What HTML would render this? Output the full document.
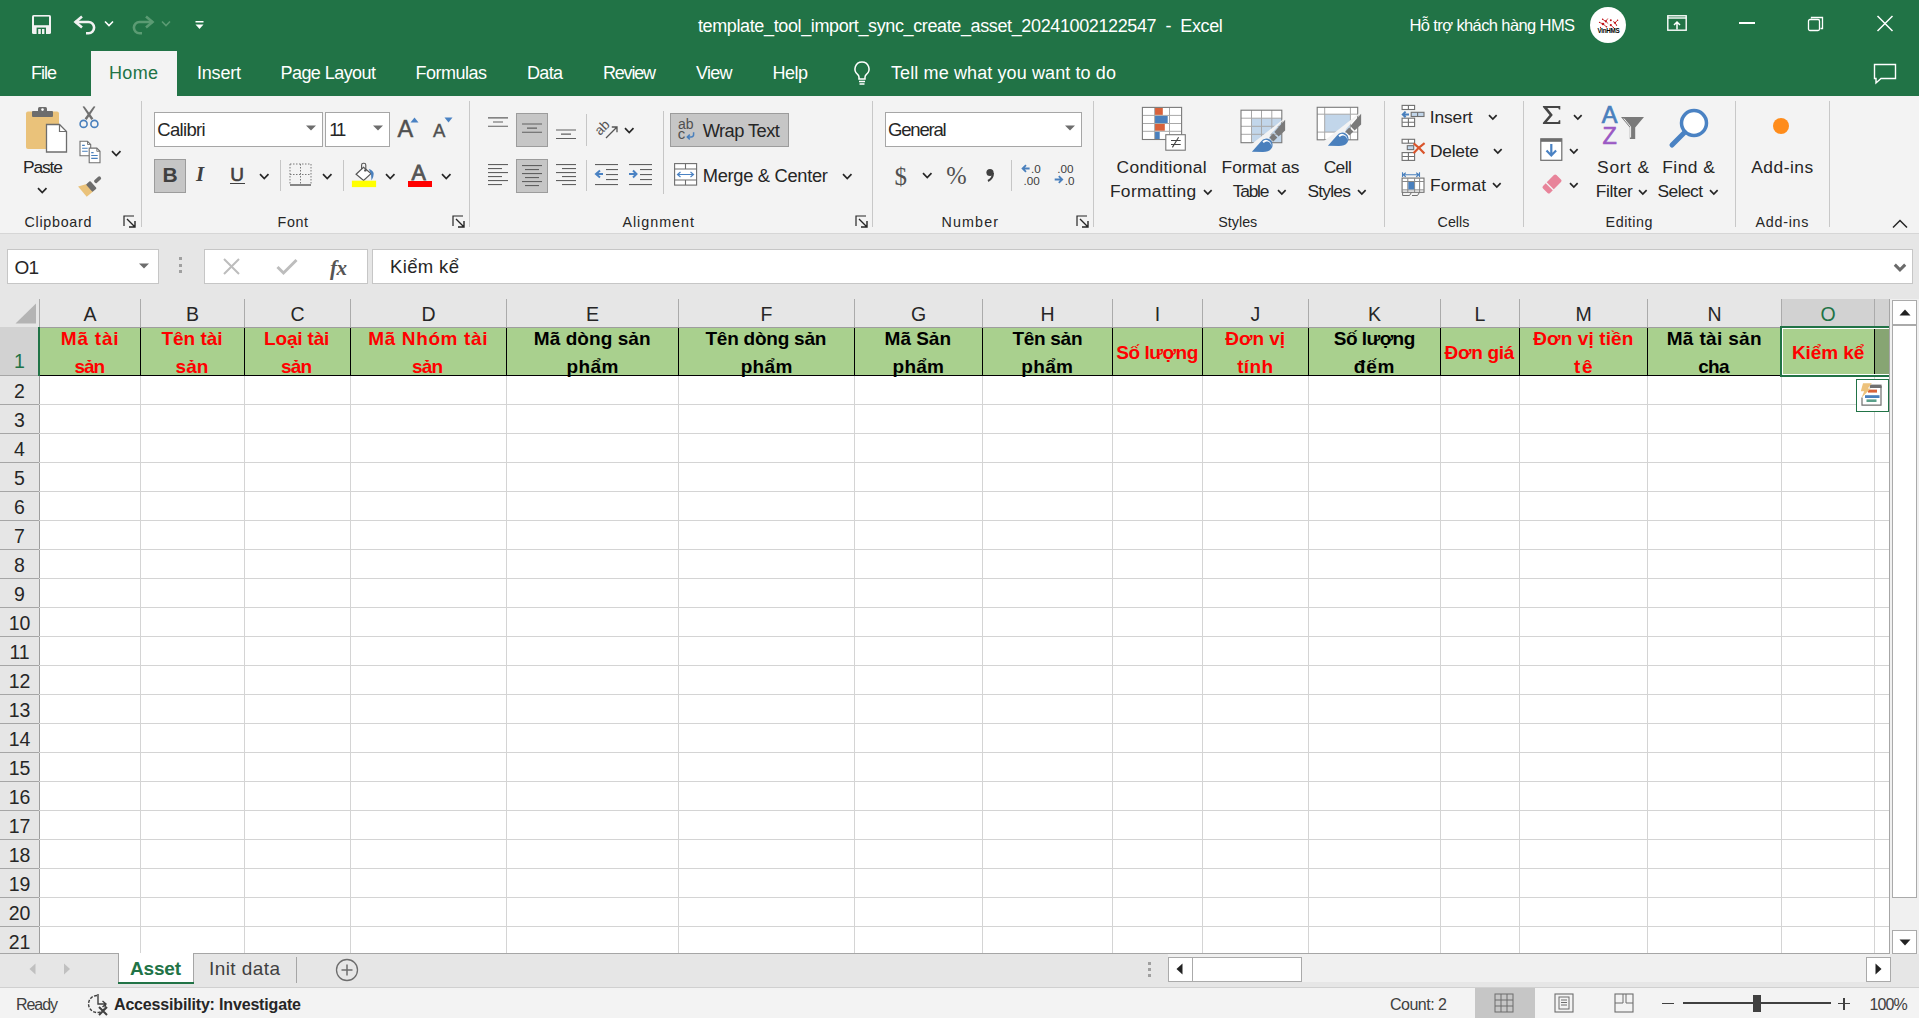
<!DOCTYPE html>
<html><head><meta charset="utf-8">
<style>
*{margin:0;padding:0;box-sizing:border-box}
html,body{width:1919px;height:1018px;overflow:hidden;background:#fff;font-family:"Liberation Sans",sans-serif;color:#262626;position:relative}
.a{position:absolute}
.t{position:absolute;white-space:nowrap;line-height:1}
svg{position:absolute;overflow:visible}
</style></head><body>
<div class="a" style="left:0px;top:0px;width:1919px;height:96px;background:#217346;"></div>
<div class="a" style="left:91px;top:51px;width:86px;height:45px;background:#f3f3f3;"></div>
<div class="a" style="left:0px;top:96px;width:1919px;height:137px;background:#f3f3f3;"></div>
<div class="a" style="left:0px;top:233px;width:1919px;height:1px;background:#d6d6d6;"></div>
<div class="a" style="left:0px;top:234px;width:1919px;height:65px;background:#e6e6e6;"></div>
<div class="t" style="left:698.0px;top:16.8px;font-size:18px;color:#ffffff;letter-spacing:-0.38px;">template_tool_import_sync_create_asset_20241002122547&nbsp;&nbsp;-&nbsp;&nbsp;Excel</div>
<div class="t" style="left:1409.5px;top:17.0px;font-size:16.5px;color:#ffffff;letter-spacing:-0.61px;">Hỗ trợ khách hàng HMS</div>
<svg style="left:32px;top:15px;" width="19" height="19" viewBox="0 0 19 19"><rect x="0" y="0" width="19" height="19" rx="1.6" fill="#f2f2f2"/><rect x="2" y="1.6" width="15" height="8.6" fill="#217346"/><rect x="4.6" y="12.6" width="9.4" height="6.4" fill="#217346"/><rect x="6.2" y="14" width="2.6" height="5" fill="#f2f2f2"/><rect x="10" y="14" width="2.4" height="5" fill="#f2f2f2"/></svg>
<svg style="left:70px;top:12px;" width="30" height="26" viewBox="0 0 30 26"><path d="M12 4.5L5.5 10 12 15.5" fill="none" stroke="#f2f2f2" stroke-width="2.6"/><path d="M5 10H18.5A5.6 5.6 0 0 1 18.5 21.2H16" fill="none" stroke="#f2f2f2" stroke-width="2.6"/></svg>
<svg style="left:104px;top:20px;" width="10" height="8" viewBox="0 0 10 8"><path d="M1 1.5l4 4 4-4" fill="none" stroke="#fff" stroke-width="1.6"/></svg>
<svg style="left:128px;top:12px;" width="30" height="26" viewBox="0 0 30 26"><path d="M18 4.5L24.5 10 18 15.5" fill="none" stroke="#5b9b73" stroke-width="2.6"/><path d="M25 10H11.5A5.6 5.6 0 0 0 11.5 21.2H14" fill="none" stroke="#5b9b73" stroke-width="2.6"/></svg>
<svg style="left:161px;top:20px;" width="10" height="8" viewBox="0 0 10 8"><path d="M1 1.5l4 4 4-4" fill="none" stroke="#5b9b73" stroke-width="1.6"/></svg>
<svg style="left:195px;top:21px;" width="9" height="9" viewBox="0 0 9 9"><rect x="0.5" y="0" width="8" height="1.5" fill="#fff"/><path d="M0.5 3.5h8l-4 4.5z" fill="#fff"/></svg>
<div class="a" style="left:1590px;top:7px;width:36px;height:36px;border-radius:50%;background:#fff"></div>
<svg style="left:1595px;top:13px;" width="26" height="22" viewBox="0 0 26 22"><g stroke="#c0141a" stroke-width="0.8" fill="none"><path d="M7.6 6.3L10.8 8.3 12.8 5.5M10.8 8.3L13.2 10.6M8 11L11.5 13.8M15.8 12.1L18.5 14.6M18 8.4L20 9.8 22.6 7.3M20 9.8L21.5 12.2M4.5 9.4L8 11"/></g><g fill="#c0141a"><circle cx="10.8" cy="8.3" r="1.1"/><circle cx="8" cy="11" r="1.3"/><circle cx="15.8" cy="7.2" r="1"/><circle cx="15.8" cy="12.1" r="1.1"/><circle cx="20" cy="9.8" r="1.1"/><circle cx="4.5" cy="9.4" r="0.6"/><circle cx="5.5" cy="14.4" r="0.6"/><circle cx="11.5" cy="13.8" r="0.8"/><circle cx="22.6" cy="7.3" r="0.7"/><circle cx="21.5" cy="12.2" r="0.6"/><circle cx="18.5" cy="14.6" r="0.6"/><circle cx="7.6" cy="6.3" r="0.7"/></g><text x="13.5" y="20.2" font-size="6.3" font-weight="bold" text-anchor="middle" fill="#000" font-family="Liberation Sans" letter-spacing="-0.3">VinHMS</text></svg>
<svg style="left:1667px;top:15px;" width="20" height="16" viewBox="0 0 20 16"><rect x="0.8" y="0.8" width="18.4" height="14.4" fill="none" stroke="#fff" stroke-width="1.4"/><path d="M0.8 3h18.4" stroke="#fff" stroke-width="1.4"/><path d="M10 14.5V7M7 10l3-3 3 3" fill="none" stroke="#fff" stroke-width="1.5"/></svg>
<div class="a" style="left:1739px;top:22px;width:16px;height:1.5px;background:#fff;"></div>
<svg style="left:1807px;top:15px;" width="18" height="17" viewBox="0 0 18 17"><path d="M4.5 3.5V2.5h11v11h-2" fill="none" stroke="#fff" stroke-width="1.3"/><rect x="1.5" y="4.5" width="11" height="11" rx="1.5" fill="none" stroke="#fff" stroke-width="1.3"/></svg>
<svg style="left:1876px;top:15px;" width="18" height="17" viewBox="0 0 18 17"><path d="M1.5 1l15 15M16.5 1l-15 15" stroke="#fff" stroke-width="1.5"/></svg>
<div class="t" style="left:31.0px;top:64.1px;font-size:18px;color:#ffffff;letter-spacing:-1.00px;">File</div>
<div class="t" style="left:109.0px;top:64.1px;font-size:18px;color:#217346;letter-spacing:0.33px;">Home</div>
<div class="t" style="left:197.0px;top:64.1px;font-size:18px;color:#ffffff;letter-spacing:-0.20px;">Insert</div>
<div class="t" style="left:280.5px;top:64.1px;font-size:18px;color:#ffffff;letter-spacing:-0.56px;">Page Layout</div>
<div class="t" style="left:415.5px;top:64.1px;font-size:18px;color:#ffffff;letter-spacing:-0.50px;">Formulas</div>
<div class="t" style="left:527.0px;top:64.1px;font-size:18px;color:#ffffff;letter-spacing:-0.67px;">Data</div>
<div class="t" style="left:603.0px;top:64.1px;font-size:18px;color:#ffffff;letter-spacing:-1.20px;">Review</div>
<div class="t" style="left:696.0px;top:64.1px;font-size:18px;color:#ffffff;letter-spacing:-0.73px;">View</div>
<div class="t" style="left:772.5px;top:64.1px;font-size:18px;color:#ffffff;letter-spacing:-0.51px;">Help</div>
<div class="t" style="left:891.0px;top:64.1px;font-size:18px;color:#ffffff;letter-spacing:0.11px;">Tell me what you want to do</div>
<svg style="left:852px;top:60px;" width="20" height="26" viewBox="0 0 20 26"><path d="M10 2a7 7 0 0 0-4.2 12.6c.8.7 1.2 1.6 1.2 2.6V19h6v-1.8c0-1 .4-1.9 1.2-2.6A7 7 0 0 0 10 2z" fill="none" stroke="#fff" stroke-width="1.5"/><path d="M7 21.5h6M7.5 24h5" stroke="#fff" stroke-width="1.5"/></svg>
<svg style="left:1873px;top:63px;" width="25" height="21" viewBox="0 0 25 21"><path d="M1.5 1.5h21v14H8l-5 4.5V15.5H1.5z" fill="none" stroke="#fff" stroke-width="1.4"/></svg>
<div class="a" style="left:141px;top:101px;width:1px;height:126px;background:#c8c8c8;"></div>
<div class="a" style="left:469px;top:101px;width:1px;height:126px;background:#c8c8c8;"></div>
<div class="a" style="left:872px;top:101px;width:1px;height:126px;background:#c8c8c8;"></div>
<div class="a" style="left:1093px;top:101px;width:1px;height:126px;background:#c8c8c8;"></div>
<div class="a" style="left:1384px;top:101px;width:1px;height:126px;background:#c8c8c8;"></div>
<div class="a" style="left:1523px;top:101px;width:1px;height:126px;background:#c8c8c8;"></div>
<div class="a" style="left:1735px;top:101px;width:1px;height:126px;background:#c8c8c8;"></div>
<div class="a" style="left:1829px;top:101px;width:1px;height:126px;background:#c8c8c8;"></div>
<div class="t" style="left:24.5px;top:214.9px;font-size:14.3px;color:#262626;letter-spacing:0.72px;">Clipboard</div>
<svg style="left:123px;top:215px;" width="13" height="13" viewBox="0 0 13 13"><path d="M1 11V1h10" fill="none" stroke="#262626" stroke-width="1.2"/><path d="M4 4l7.5 7.5M6 12h6V6" fill="none" stroke="#262626" stroke-width="1.4"/></svg>
<div class="t" style="left:277.6px;top:214.9px;font-size:14.3px;color:#262626;letter-spacing:0.60px;">Font</div>
<svg style="left:452px;top:215px;" width="13" height="13" viewBox="0 0 13 13"><path d="M1 11V1h10" fill="none" stroke="#262626" stroke-width="1.2"/><path d="M4 4l7.5 7.5M6 12h6V6" fill="none" stroke="#262626" stroke-width="1.4"/></svg>
<div class="t" style="left:622.4px;top:214.9px;font-size:14.3px;color:#262626;letter-spacing:1.00px;">Alignment</div>
<svg style="left:855px;top:215px;" width="13" height="13" viewBox="0 0 13 13"><path d="M1 11V1h10" fill="none" stroke="#262626" stroke-width="1.2"/><path d="M4 4l7.5 7.5M6 12h6V6" fill="none" stroke="#262626" stroke-width="1.4"/></svg>
<div class="t" style="left:941.6px;top:214.9px;font-size:14.3px;color:#262626;letter-spacing:1.11px;">Number</div>
<svg style="left:1076px;top:215px;" width="13" height="13" viewBox="0 0 13 13"><path d="M1 11V1h10" fill="none" stroke="#262626" stroke-width="1.2"/><path d="M4 4l7.5 7.5M6 12h6V6" fill="none" stroke="#262626" stroke-width="1.4"/></svg>
<div class="t" style="left:1218.2px;top:214.9px;font-size:14.3px;color:#262626;letter-spacing:0.03px;">Styles</div>
<div class="t" style="left:1437.6px;top:214.9px;font-size:14.3px;color:#262626;letter-spacing:-0.02px;">Cells</div>
<div class="t" style="left:1605.6px;top:214.9px;font-size:14.3px;color:#262626;letter-spacing:0.53px;">Editing</div>
<div class="t" style="left:1755.6px;top:214.9px;font-size:14.3px;color:#262626;letter-spacing:0.72px;">Add-ins</div>
<svg style="left:1892px;top:219px;" width="16" height="10" viewBox="0 0 16 10"><path d="M1 8.5l7-7 7 7" fill="none" stroke="#262626" stroke-width="1.5"/></svg>
<svg style="left:25px;top:106px;" width="44" height="47" viewBox="0 0 44 47"><rect x="1" y="5.5" width="33" height="37.5" rx="2" fill="#eac27a"/><rect x="7" y="5" width="21" height="6" rx="1" fill="#6d6d6d"/><rect x="13" y="1" width="9" height="6" rx="1.5" fill="#6d6d6d"/><circle cx="17.5" cy="3.6" r="1.3" fill="#fff"/><path d="M21.5 18.5h13l7 7v20.5h-20z" fill="#fff" stroke="#6d6d6d" stroke-width="1.3"/><path d="M34.5 18.5v7h7" fill="none" stroke="#6d6d6d" stroke-width="1.2"/></svg>
<div class="t" style="left:23.1px;top:159.0px;font-size:17.4px;color:#262626;letter-spacing:-1.15px;">Paste</div>
<svg style="left:36.95px;top:186.7px;" width="10.5" height="7.0" viewBox="0 0 10.5 7.0"><path d="M1 1.2l4.25 4.4 4.25 -4.4" fill="none" stroke="#262626" stroke-width="1.7"/></svg>
<svg style="left:78px;top:105px;" width="22" height="24" viewBox="0 0 22 24"><path d="M4.6 1.8Q5.4 0.9 6.5 1.6L15.4 13.4 13.3 15.1z" fill="#707070"/><path d="M17.4 1.8Q16.6 0.9 15.5 1.6L6.6 13.4 8.7 15.1z" fill="#707070"/><circle cx="5.6" cy="18.9" r="3.5" fill="#f3f3f3" stroke="#4a80bd" stroke-width="1.6"/><circle cx="16.4" cy="18.9" r="3.5" fill="#f3f3f3" stroke="#4a80bd" stroke-width="1.6"/></svg>
<svg style="left:79px;top:140px;" width="23" height="24" viewBox="0 0 23 24"><path d="M1 1.3H8.5L11.7 4.5V15.7H1z" fill="#fff" stroke="#707070" stroke-width="1.1"/><path d="M8.5 1.3V4.5H11.7" fill="none" stroke="#707070" stroke-width="0.9"/><path d="M3.1 5.4h2.7M3.1 8.3h5.6M3.1 11.3h5.6" stroke="#4a80bd" stroke-width="1.1"/><path d="M10.2 8.1H17.8L21 11.3V22.7H10.2z" fill="#fff" stroke="#707070" stroke-width="1.1"/><path d="M17.8 8.1V11.3H21" fill="none" stroke="#707070" stroke-width="0.9"/><path d="M12.2 12.6h2.4M12.2 15.5h6.5M12.2 18.4h6.5" stroke="#4a80bd" stroke-width="1.1"/></svg>
<svg style="left:110.95px;top:149.5px;" width="10.5" height="7.0" viewBox="0 0 10.5 7.0"><path d="M1 1.2l4.25 4.4 4.25 -4.4" fill="none" stroke="#262626" stroke-width="1.7"/></svg>
<svg style="left:77px;top:176px;" width="25" height="23" viewBox="0 0 25 23"><path d="M1.1 10.4L9.7 8 16.1 15.4 9.7 20.8z" fill="#eac27a"/><rect x="9.3" y="7.6" width="10" height="5.6" rx="1" transform="rotate(48 14.3 10.4)" fill="#6d6d6d"/><rect x="16.6" y="1.9" width="8" height="3.6" rx="1.6" transform="rotate(-42 20.6 3.7)" fill="#6d6d6d"/></svg>
<div class="a" style="left:154px;top:112px;width:169px;height:35px;background:#fff;border:1px solid #a6a6a6;"></div>
<div class="t" style="left:157.2px;top:121.3px;font-size:18.5px;color:#262626;letter-spacing:-0.66px;">Calibri</div>
<svg style="left:306px;top:125px;" width="11" height="7" viewBox="0 0 11 7"><path d="M0 0.5h10l-5 5z" fill="#6d6d6d"/></svg>
<div class="a" style="left:325px;top:112px;width:65px;height:35px;background:#fff;border:1px solid #a6a6a6;"></div>
<div class="t" style="left:329.2px;top:121.3px;font-size:18.5px;color:#262626;letter-spacing:-2.01px;">11</div>
<svg style="left:373px;top:125px;" width="11" height="7" viewBox="0 0 11 7"><path d="M0 0.5h10l-5 5z" fill="#6d6d6d"/></svg>
<div class="t" style="left:397.5px;top:118.1px;font-size:23.5px;color:#505050;-webkit-text-stroke:0.5px #505050;">A</div>
<svg style="left:410px;top:117px;" width="9" height="6" viewBox="0 0 9 6"><path d="M0.5 5.5l4-5 4 5z" fill="#4a82c3"/></svg>
<div class="t" style="left:433.0px;top:122.3px;font-size:18.5px;color:#505050;-webkit-text-stroke:0.4px #505050;">A</div>
<svg style="left:444px;top:117px;" width="9" height="6" viewBox="0 0 9 6"><path d="M0.5 0.5h8l-4 5z" fill="#4a82c3"/></svg>
<div class="a" style="left:154px;top:159px;width:32px;height:34px;background:#c6c6c6;border:1px solid #9c9c9c;"></div>
<div class="t" style="left:162.6px;top:163.7px;font-size:21px;color:#404040;font-weight:bold;">B</div>
<div class="t" style="left:196.0px;top:163.7px;font-size:21px;color:#404040;font-weight:bold;font-family:'Liberation Serif',serif;font-style:italic;">I</div>
<div class="t" style="left:230.3px;top:165.4px;font-size:19px;color:#404040;-webkit-text-stroke:0.6px #404040;">U</div>
<div class="a" style="left:230px;top:183px;width:15px;height:1.3px;background:#404040;"></div>
<svg style="left:258.95px;top:172.8px;" width="10.5" height="7.0" viewBox="0 0 10.5 7.0"><path d="M1 1.2l4.25 4.4 4.25 -4.4" fill="none" stroke="#262626" stroke-width="1.7"/></svg>
<div class="a" style="left:280px;top:160px;width:1px;height:31px;background:#c6c6c6;"></div>
<svg style="left:289px;top:163px;" width="23" height="23" viewBox="0 0 23 23"><path d="M1 1h21M1 11.5h21M1 1v21M11.5 1v21M22 1v21" stroke="#7a7a7a" stroke-width="1" stroke-dasharray="1.5 1.5" fill="none"/><path d="M1 22h21" stroke="#555" stroke-width="1.4"/></svg>
<svg style="left:321.85px;top:172.8px;" width="10.5" height="7.0" viewBox="0 0 10.5 7.0"><path d="M1 1.2l4.25 4.4 4.25 -4.4" fill="none" stroke="#262626" stroke-width="1.7"/></svg>
<div class="a" style="left:343px;top:160px;width:1px;height:31px;background:#c6c6c6;"></div>
<svg style="left:350px;top:160px;" width="28" height="28" viewBox="0 0 28 28"><path d="M6.1 14.3L13.5 7.4 21 13.6 13.6 20.5z" fill="#fff" stroke="#555" stroke-width="1.2"/><path d="M11.6 9.3V5Q11.6 3.2 13.4 3.2H14Q15.8 3.2 15.8 5V10.3" fill="none" stroke="#555" stroke-width="1.1"/><circle cx="15.3" cy="10.4" r="1.2" fill="#555"/><path d="M18.8 9.1Q23.5 10.5 23.7 13.8Q23.8 17 21.5 20.5L21 14z" fill="#4a80bd"/><rect x="1.9" y="20.7" width="24.2" height="6.4" fill="#ffff00"/></svg>
<svg style="left:384.95px;top:172.8px;" width="10.5" height="7.0" viewBox="0 0 10.5 7.0"><path d="M1 1.2l4.25 4.4 4.25 -4.4" fill="none" stroke="#262626" stroke-width="1.7"/></svg>
<div class="t" style="left:411.5px;top:162.8px;font-size:21.5px;color:#555;-webkit-text-stroke:0.8px #555;">A</div>
<div class="a" style="left:408px;top:181px;width:24px;height:6px;background:#ff0000;"></div>
<svg style="left:440.85px;top:172.8px;" width="10.5" height="7.0" viewBox="0 0 10.5 7.0"><path d="M1 1.2l4.25 4.4 4.25 -4.4" fill="none" stroke="#262626" stroke-width="1.7"/></svg>
<svg style="left:487px;top:116px;" width="22" height="13" viewBox="0 0 22 13"><path d="M1 1.9h20M6 6h10M1 10.2h20" stroke="#606060" stroke-width="1.1"/></svg>
<div class="a" style="left:516px;top:113px;width:32px;height:34px;background:#c6c6c6;border:1px solid #9c9c9c;"></div>
<svg style="left:521px;top:122px;" width="22" height="13" viewBox="0 0 22 13"><path d="M1 2h20M6 6.1h10M1 10.3h20" stroke="#606060" stroke-width="1.1"/></svg>
<svg style="left:555px;top:128px;" width="22" height="13" viewBox="0 0 22 13"><path d="M1 2h20M6 6.1h10M1 10.5h20" stroke="#606060" stroke-width="1.1"/></svg>
<div class="a" style="left:586px;top:114px;width:1px;height:32px;background:#c6c6c6;"></div>
<svg style="left:594px;top:117px;" width="26" height="24" viewBox="0 0 26 24"><text x="6" y="19" font-size="13.5" fill="#555" font-family="Liberation Sans" transform="rotate(-45 6 19)">ab</text><path d="M12 21L23 10M17.8 10H23V15.2" fill="none" stroke="#555" stroke-width="1.3"/></svg>
<svg style="left:624.05px;top:127.1px;" width="10.5" height="7.0" viewBox="0 0 10.5 7.0"><path d="M1 1.2l4.25 4.4 4.25 -4.4" fill="none" stroke="#262626" stroke-width="1.7"/></svg>
<div class="a" style="left:663px;top:111px;width:1px;height:83px;background:#c6c6c6;"></div>
<div class="a" style="left:670px;top:113px;width:119px;height:34px;background:#c6c6c6;border:1px solid #9c9c9c;"></div>
<svg style="left:676px;top:116px;" width="22" height="26" viewBox="0 0 22 26"><text x="2" y="12.6" font-size="14" fill="#505050" font-family="Liberation Sans">ab</text><text x="1.8" y="22.7" font-size="15" fill="#505050" font-family="Liberation Sans">c</text><path d="M17.6 16.2V18.6Q17.6 21 15.2 21H11.6M13.8 18.6L11.3 21 13.8 23.4" fill="none" stroke="#4a80bd" stroke-width="1.5"/></svg>
<div class="t" style="left:702.7px;top:121.5px;font-size:18.3px;color:#262626;letter-spacing:-0.55px;">Wrap Text</div>
<svg style="left:488px;top:163px;" width="21" height="22" viewBox="0 0 21 22"><rect x="0" y="1" width="20" height="1.1" fill="#606060"/><rect x="0" y="5" width="14" height="1.1" fill="#606060"/><rect x="0" y="9" width="20" height="1.1" fill="#606060"/><rect x="0" y="13" width="14" height="1.1" fill="#606060"/><rect x="0" y="17" width="20" height="1.1" fill="#606060"/><rect x="0" y="21" width="14" height="1.1" fill="#606060"/></svg>
<div class="a" style="left:516px;top:159px;width:32px;height:34px;background:#c6c6c6;border:1px solid #9c9c9c;"></div>
<svg style="left:522px;top:164px;" width="20" height="23" viewBox="0 0 20 23"><rect x="0" y="1" width="20" height="1.1" fill="#606060"/><rect x="3" y="5" width="14" height="1.1" fill="#606060"/><rect x="0" y="9" width="20" height="1.1" fill="#606060"/><rect x="3" y="13" width="14" height="1.1" fill="#606060"/><rect x="0" y="17" width="20" height="1.1" fill="#606060"/><rect x="3" y="21" width="14" height="1.1" fill="#606060"/></svg>
<svg style="left:556px;top:163px;" width="21" height="22" viewBox="0 0 21 22"><rect x="0" y="1" width="20" height="1.1" fill="#606060"/><rect x="6" y="5" width="14" height="1.1" fill="#606060"/><rect x="0" y="9" width="20" height="1.1" fill="#606060"/><rect x="6" y="13" width="14" height="1.1" fill="#606060"/><rect x="0" y="17" width="20" height="1.1" fill="#606060"/><rect x="6" y="21" width="14" height="1.1" fill="#606060"/></svg>
<div class="a" style="left:586px;top:160px;width:1px;height:31px;background:#c6c6c6;"></div>
<svg style="left:595px;top:163px;" width="24" height="22" viewBox="0 0 24 22"><rect x="0" y="1" width="23" height="1.1" fill="#606060"/><rect x="0" y="21" width="23" height="1.1" fill="#606060"/><rect x="11" y="6" width="12" height="1.1" fill="#606060"/><rect x="11" y="11" width="12" height="1.1" fill="#606060"/><rect x="11" y="16" width="12" height="1.1" fill="#606060"/><path d="M1 11h7M5 7.5L1 11l4 3.5" fill="none" stroke="#4a82c3" stroke-width="2"/></svg>
<svg style="left:629px;top:163px;" width="24" height="22" viewBox="0 0 24 22"><rect x="0" y="1" width="23" height="1.1" fill="#606060"/><rect x="0" y="21" width="23" height="1.1" fill="#606060"/><rect x="11" y="6" width="12" height="1.1" fill="#606060"/><rect x="11" y="11" width="12" height="1.1" fill="#606060"/><rect x="11" y="16" width="12" height="1.1" fill="#606060"/><path d="M0 11h7M4 7.5L7.5 11 4 14.5" fill="none" stroke="#4a82c3" stroke-width="2"/></svg>
<svg style="left:674px;top:163px;" width="24" height="23" viewBox="0 0 24 23"><rect x="0.6" y="0.6" width="22" height="21.5" fill="#fff" stroke="#6d6d6d" stroke-width="1.1"/><path d="M0.6 6h22M0.6 17h22M11.5 0.6v5.4M11.5 17v5" stroke="#6d6d6d" stroke-width="1.1"/><path d="M3.5 11.5h16M6.5 9l-3 2.5 3 2.5M16.5 9l3 2.5-3 2.5" fill="none" stroke="#4a82c3" stroke-width="1.2"/></svg>
<div class="t" style="left:702.7px;top:167.4px;font-size:18.3px;color:#262626;letter-spacing:-0.29px;">Merge &amp; Center</div>
<svg style="left:842.35px;top:172.5px;" width="10.5" height="7.0" viewBox="0 0 10.5 7.0"><path d="M1 1.2l4.25 4.4 4.25 -4.4" fill="none" stroke="#262626" stroke-width="1.7"/></svg>
<div class="a" style="left:885px;top:112px;width:197px;height:35px;background:#fff;border:1px solid #a6a6a6;"></div>
<div class="t" style="left:888.1px;top:120.9px;font-size:18.5px;color:#262626;letter-spacing:-1.20px;">General</div>
<svg style="left:1065px;top:125px;" width="11" height="7" viewBox="0 0 11 7"><path d="M0 0.5h10l-5 5z" fill="#6d6d6d"/></svg>
<div class="t" style="left:894.4px;top:164.3px;font-size:25px;color:#505050;font-family:'Liberation Serif',serif;">$</div>
<svg style="left:921.75px;top:172.3px;" width="10.5" height="7.0" viewBox="0 0 10.5 7.0"><path d="M1 1.2l4.25 4.4 4.25 -4.4" fill="none" stroke="#262626" stroke-width="1.7"/></svg>
<div class="t" style="left:946.2px;top:163.6px;font-size:24.5px;color:#505050;font-family:'Liberation Serif',serif;">%</div>
<svg style="left:985px;top:168px;" width="11" height="14" viewBox="0 0 11 14"><circle cx="5" cy="4.5" r="3.6" fill="#404040"/><path d="M8 5c0 4-2 6.5-5 8" fill="none" stroke="#404040" stroke-width="2"/></svg>
<div class="a" style="left:1011px;top:160px;width:1px;height:31px;background:#c6c6c6;"></div>
<svg style="left:1020px;top:162px;" width="26" height="26" viewBox="0 0 26 26"><path d="M2.6 6.5h7M6 3.2L2.6 6.5 6 9.8" fill="none" stroke="#4a80bd" stroke-width="1.8"/><text x="11" y="10.8" font-size="11.7" fill="#404040" font-family="Liberation Sans">.0</text><text x="3.4" y="23" font-size="11.7" fill="#404040" font-family="Liberation Sans">.00</text></svg>
<svg style="left:1053px;top:162px;" width="26" height="26" viewBox="0 0 26 26"><text x="4.2" y="10.8" font-size="11.7" fill="#404040" font-family="Liberation Sans">.00</text><path d="M1.7 17.5h7.5M5.8 14.2l3.4 3.3-3.4 3.3" fill="none" stroke="#4a80bd" stroke-width="1.8"/><text x="11.8" y="23" font-size="11.7" fill="#404040" font-family="Liberation Sans">.0</text></svg>
<svg style="left:1141px;top:106px;" width="46" height="46" viewBox="0 0 46 46"><rect x="1.4" y="1.4" width="39.2" height="32.1" fill="#fff"/><rect x="14" y="1.9" width="7.8" height="7" fill="#d9623b"/><rect x="14" y="9.9" width="12.7" height="7.1" fill="#4a80bd"/><rect x="14" y="18" width="9.8" height="6.8" fill="#d9623b"/><rect x="14" y="25.8" width="4.7" height="7.2" fill="#4a80bd"/><path d="M1.4 9.4h39.2M1.4 17.5h39.2M1.4 25.3h39.2M13.6 1.4v32.1M28.5 1.4v32.1" stroke="#a8a8a8" stroke-width="1"/><rect x="1.4" y="1.4" width="39.2" height="32.1" fill="none" stroke="#7a7a7a" stroke-width="1.1"/><rect x="24.8" y="28.7" width="19.5" height="15.5" fill="#fff" stroke="#777" stroke-width="1.1"/><path d="M30 34.5h9.7M30 38.5h9.7M37.6 31.2l-6.2 10.2" stroke="#444" stroke-width="1.1"/></svg>
<div class="t" style="left:1116.6px;top:159.1px;font-size:17.4px;color:#262626;letter-spacing:0.29px;">Conditional</div>
<div class="t" style="left:1109.9px;top:183.1px;font-size:17.4px;color:#262626;letter-spacing:0.35px;">Formatting</div>
<svg style="left:1202.675px;top:188.75px;" width="9.65" height="6.5" viewBox="0 0 9.65 6.5"><path d="M1 1.2l3.825 3.9 3.825 -3.9" fill="none" stroke="#262626" stroke-width="1.7"/></svg>
<svg style="left:1240px;top:109px;" width="48" height="46" viewBox="0 0 48 46"><rect x="1" y="1.2" width="40.8" height="32.5" fill="#fff"/><rect x="11.5" y="9.2" width="30.3" height="24.5" fill="#c2d6ea"/><path d="M1 9.2h40.8M1 17.3h40.8M1 25.3h40.8M11.5 1.2v32.5M21.5 1.2v32.5M31.8 1.2v32.5" stroke="#a8a8a8" stroke-width="1"/><rect x="1" y="1.2" width="40.8" height="32.5" fill="none" stroke="#7a7a7a" stroke-width="1.1"/><path d="M46 8L30 26 25 45 8 45 8 38z" fill="#f3f3f3"/><path d="M45.1 10.7V21.6L38.6 27.4 34.3 23z" fill="#7a7a7a"/><path d="M29.4 28.6L33.2 24.6 37.4 28.6 33.4 32.6z" fill="#7a7a7a"/><path d="M11.9 42.8L21.2 32.2A6.2 6.2 0 0 1 31.4 39.6C29.6 42.2 26.6 43.1 23 43.1z" fill="#4a80bd"/><path d="M22.4 32.4A5.2 5.2 0 0 1 30.2 39.2 4 4 0 0 0 23.8 34z" fill="#fff"/></svg>
<div class="t" style="left:1221.6px;top:159.1px;font-size:17.4px;color:#262626;letter-spacing:-0.05px;">Format as</div>
<div class="t" style="left:1232.8px;top:183.1px;font-size:17.4px;color:#262626;letter-spacing:-1.25px;">Table</div>
<svg style="left:1277.175px;top:188.75px;" width="9.65" height="6.5" viewBox="0 0 9.65 6.5"><path d="M1 1.2l3.825 3.9 3.825 -3.9" fill="none" stroke="#262626" stroke-width="1.7"/></svg>
<svg style="left:1316px;top:106px;" width="48" height="46" viewBox="0 0 48 46"><rect x="1.2" y="1.3" width="40.5" height="32.5" fill="#fff"/><rect x="8.7" y="8.2" width="25.7" height="17.9" fill="#c2d6ea"/><path d="M1.2 8.2h40.5M1.2 26.1h40.5M8.7 1.3v32.5M34.4 1.3v32.5" stroke="#a8a8a8" stroke-width="1"/><rect x="1.2" y="1.3" width="40.5" height="32.5" fill="none" stroke="#7a7a7a" stroke-width="1.1"/><path d="M46 5L30 23 25 42 8 42 8 35z" fill="#f3f3f3"/><g transform="translate(0 -3)"><path d="M45.1 10.7V21.6L38.6 27.4 34.3 23z" fill="#7a7a7a"/><path d="M29.4 28.6L33.2 24.6 37.4 28.6 33.4 32.6z" fill="#7a7a7a"/><path d="M11.9 42.8L21.2 32.2A6.2 6.2 0 0 1 31.4 39.6C29.6 42.2 26.6 43.1 23 43.1z" fill="#4a80bd"/><path d="M22.4 32.4A5.2 5.2 0 0 1 30.2 39.2 4 4 0 0 0 23.8 34z" fill="#fff"/></g></svg>
<div class="t" style="left:1323.7px;top:159.1px;font-size:17.4px;color:#262626;letter-spacing:-0.63px;">Cell</div>
<div class="t" style="left:1307.4px;top:183.1px;font-size:17.4px;color:#262626;letter-spacing:-0.76px;">Styles</div>
<svg style="left:1357.375px;top:188.75px;" width="9.65" height="6.5" viewBox="0 0 9.65 6.5"><path d="M1 1.2l3.825 3.9 3.825 -3.9" fill="none" stroke="#262626" stroke-width="1.7"/></svg>
<svg style="left:1401px;top:104px;" width="26" height="24" viewBox="0 0 26 24"><g fill="#fff" stroke="#707070" stroke-width="1.1"><rect x="1.1" y="1.4" width="12.5" height="4.1"/><rect x="1.1" y="14.2" width="12.5" height="8.3"/><rect x="10.2" y="8.3" width="12.8" height="4.2" fill="#c2d6ea"/></g><path d="M7.4 1.4v4.1M7.4 14.2v8.3M1.1 18.3h12.5M16.6 8.3v4.2" stroke="#707070" stroke-width="1.1"/><path d="M1.8 10.4H8M4.6 7.6L1.8 10.4 4.6 13.2" fill="none" stroke="#4a80bd" stroke-width="2"/></svg>
<div class="t" style="left:1429.7px;top:109.0px;font-size:17.4px;color:#262626;letter-spacing:-0.10px;">Insert</div>
<svg style="left:1487.575px;top:113.95px;" width="9.65" height="6.5" viewBox="0 0 9.65 6.5"><path d="M1 1.2l3.825 3.9 3.825 -3.9" fill="none" stroke="#262626" stroke-width="1.7"/></svg>
<svg style="left:1401px;top:138px;" width="26" height="24" viewBox="0 0 26 24"><g fill="#fff" stroke="#707070" stroke-width="1.1"><rect x="1.1" y="1.3" width="12.5" height="3.9"/><rect x="1.1" y="14.6" width="12.5" height="7.8"/><rect x="6.3" y="7.7" width="6.4" height="3.9" fill="#c2d6ea"/></g><path d="M7.4 1.3v3.9M7.4 14.6v7.8M1.1 18.5h12.5" stroke="#707070" stroke-width="1.1"/><path d="M12.5 15.2Q17 10 23.6 5.2M12.6 5.4Q18 9.5 23.4 15.4" fill="none" stroke="#d9542b" stroke-width="2.2"/></svg>
<div class="t" style="left:1430.0px;top:142.7px;font-size:17.4px;color:#262626;letter-spacing:-0.28px;">Delete</div>
<svg style="left:1493.175px;top:147.95px;" width="9.65" height="6.5" viewBox="0 0 9.65 6.5"><path d="M1 1.2l3.825 3.9 3.825 -3.9" fill="none" stroke="#262626" stroke-width="1.7"/></svg>
<svg style="left:1401px;top:171px;" width="26" height="26" viewBox="0 0 26 26"><path d="M1.5 1.3V6M18.5 1.3V6M2 3.7H18M4.8 1.7L2 3.7 4.8 5.7M15.2 1.7L18 3.7 15.2 5.7" fill="none" stroke="#4a80bd" stroke-width="1.1"/><rect x="1.1" y="7.1" width="21.9" height="14.2" fill="#fff" stroke="#707070" stroke-width="1.1"/><path d="M1.1 10.5h21.9M1.1 18.9h21.9M6.8 7.1v14.2M13.6 7.1v14.2M18.6 7.1v14.2" stroke="#888" stroke-width="1"/><rect x="7.3" y="11" width="5.8" height="7.4" fill="#4a80bd"/><path d="M1.6 21.3V24.5H8.5L10.5 21.3M11 24.5H16.5L18.5 21.3" fill="none" stroke="#707070" stroke-width="1"/></svg>
<div class="t" style="left:1430.0px;top:177.0px;font-size:17.4px;color:#262626;letter-spacing:0.22px;">Format</div>
<svg style="left:1491.7749999999999px;top:181.75px;" width="9.65" height="6.5" viewBox="0 0 9.65 6.5"><path d="M1 1.2l3.825 3.9 3.825 -3.9" fill="none" stroke="#262626" stroke-width="1.7"/></svg>
<svg style="left:1542px;top:105px;" width="20" height="21" viewBox="0 0 20 21"><path d="M0.9 0.9H18.3V4.6H17L16.2 2.9H5.3L10.8 9.9 4.9 17.1H16.2L17 15.3H18.3V19.1H0.9V17.8L7.5 10 0.9 2.1z" fill="#454545"/></svg>
<svg style="left:1573.175px;top:113.95px;" width="9.65" height="6.5" viewBox="0 0 9.65 6.5"><path d="M1 1.2l3.825 3.9 3.825 -3.9" fill="none" stroke="#262626" stroke-width="1.7"/></svg>
<svg style="left:1540px;top:138px;" width="23" height="24" viewBox="0 0 23 24"><rect x="0.8" y="0.8" width="21" height="21.5" fill="#fff" stroke="#6d6d6d" stroke-width="1.2"/><rect x="0.8" y="0.8" width="21" height="3" fill="#6d6d6d"/><path d="M11.3 6v11M6.5 12.5l4.8 5 4.8-5" fill="none" stroke="#4a82c3" stroke-width="2.2"/></svg>
<svg style="left:1568.975px;top:147.75px;" width="9.65" height="6.5" viewBox="0 0 9.65 6.5"><path d="M1 1.2l3.825 3.9 3.825 -3.9" fill="none" stroke="#262626" stroke-width="1.7"/></svg>
<svg style="left:1538px;top:170px;" width="28" height="28" viewBox="0 0 28 28"><g transform="rotate(-45 14 14)"><rect x="4.5" y="9" width="19" height="10" rx="1.8" fill="#e8849a"/><rect x="10" y="8" width="1.4" height="12" fill="#f3f3f3"/></g></svg>
<svg style="left:1568.975px;top:181.75px;" width="9.65" height="6.5" viewBox="0 0 9.65 6.5"><path d="M1 1.2l3.825 3.9 3.825 -3.9" fill="none" stroke="#262626" stroke-width="1.7"/></svg>
<div class="t" style="left:1601.8px;top:104.1px;font-size:23.5px;color:#4a80bd;-webkit-text-stroke:0.7px #4a80bd;">A</div>
<div class="t" style="left:1602.5px;top:125.3px;font-size:23.5px;color:#9b59c4;-webkit-text-stroke:0.6px #9b59c4;">Z</div>
<svg style="left:1620px;top:116px;" width="25" height="25" viewBox="0 0 25 25"><path d="M1 1h23l-8.8 10.6V23H9.8V11.6z" fill="#7a7a7a"/><path d="M3.8 2.5l6.8 8.2V21.5" fill="none" stroke="#fff" stroke-width="0.9"/></svg>
<div class="t" style="left:1597.1px;top:159.1px;font-size:17.4px;color:#262626;letter-spacing:0.73px;">Sort &amp;</div>
<div class="t" style="left:1595.7px;top:183.1px;font-size:17.4px;color:#262626;letter-spacing:-0.31px;">Filter</div>
<svg style="left:1638.375px;top:188.75px;" width="9.65" height="6.5" viewBox="0 0 9.65 6.5"><path d="M1 1.2l3.825 3.9 3.825 -3.9" fill="none" stroke="#262626" stroke-width="1.7"/></svg>
<svg style="left:1668px;top:107px;" width="44" height="42" viewBox="0 0 44 42"><circle cx="26" cy="16" r="12.5" fill="#fff" stroke="#4a82c3" stroke-width="3.5"/><path d="M16.5 25.5L4 38" stroke="#4a82c3" stroke-width="5" stroke-linecap="round"/></svg>
<div class="t" style="left:1662.3px;top:159.1px;font-size:17.4px;color:#262626;letter-spacing:0.44px;">Find &amp;</div>
<div class="t" style="left:1657.5px;top:183.1px;font-size:17.4px;color:#262626;letter-spacing:-0.57px;">Select</div>
<svg style="left:1708.575px;top:188.75px;" width="9.65" height="6.5" viewBox="0 0 9.65 6.5"><path d="M1 1.2l3.825 3.9 3.825 -3.9" fill="none" stroke="#262626" stroke-width="1.7"/></svg>
<div class="a" style="left:1773px;top:118px;width:16px;height:16px;border-radius:50%;background:#ff8c1a;filter:blur(0.4px)"></div>
<div class="t" style="left:1751.3px;top:159.1px;font-size:17.4px;color:#262626;letter-spacing:0.47px;">Add-ins</div>
<div class="a" style="left:7px;top:249px;width:152px;height:35px;background:#fff;border:1px solid #c6c6c6;"></div>
<div class="t" style="left:14.5px;top:257.7px;font-size:19px;color:#262626;letter-spacing:-0.85px;">O1</div>
<svg style="left:139px;top:263px;" width="11" height="7" viewBox="0 0 11 7"><path d="M0 0.5h10l-5 5z" fill="#6d6d6d"/></svg>
<div class="a" style="left:179px;top:257px;width:3px;height:3px;background:#a0a0a0;"></div>
<div class="a" style="left:179px;top:264px;width:3px;height:3px;background:#a0a0a0;"></div>
<div class="a" style="left:179px;top:270px;width:3px;height:3px;background:#a0a0a0;"></div>
<div class="a" style="left:204px;top:249px;width:164px;height:35px;background:#fff;border:1px solid #c6c6c6;"></div>
<svg style="left:222px;top:257px;" width="20" height="19" viewBox="0 0 20 19"><path d="M2 2l15 15M17 2L2 17" stroke="#bdbdbd" stroke-width="2"/></svg>
<svg style="left:276px;top:258px;" width="22" height="17" viewBox="0 0 22 17"><path d="M1.5 9l6 6 13-13" fill="none" stroke="#bdbdbd" stroke-width="3"/></svg>
<div class="t" style="left:330.0px;top:258.2px;font-size:21px;color:#555;font-weight:bold;font-family:'Liberation Serif',serif;font-style:italic;letter-spacing:-0.5px;">fx</div>
<div class="a" style="left:372px;top:249px;width:1541px;height:35px;background:#fff;border:1px solid #c6c6c6;"></div>
<div class="t" style="left:390.0px;top:258.1px;font-size:18.5px;color:#262626;letter-spacing:0.36px;">Kiểm kể</div>
<svg style="left:1893px;top:263px;" width="14" height="10" viewBox="0 0 14 10"><path d="M1.8 1.6l5.2 5.2 5.2-5.2" fill="none" stroke="#6a6a6a" stroke-width="3"/></svg>
<div class="a" style="left:39px;top:327px;width:1850px;height:626px;background:#fff;"></div>
<div class="a" style="left:0px;top:299px;width:1889px;height:28px;background:#e6e6e6;"></div>
<div class="a" style="left:1781px;top:299px;width:108px;height:28px;background:#d2d2d2;"></div>
<svg style="left:15px;top:303px;" width="22" height="21" viewBox="0 0 22 21"><path d="M21 0.5V20.5H0.5z" fill="#b4b4b4"/></svg>
<div class="a" style="left:39px;top:299px;width:1px;height:28px;background:#ababab;"></div>
<div class="a" style="left:140px;top:299px;width:1px;height:28px;background:#ababab;"></div>
<div class="a" style="left:244px;top:299px;width:1px;height:28px;background:#ababab;"></div>
<div class="a" style="left:350px;top:299px;width:1px;height:28px;background:#ababab;"></div>
<div class="a" style="left:506px;top:299px;width:1px;height:28px;background:#ababab;"></div>
<div class="a" style="left:678px;top:299px;width:1px;height:28px;background:#ababab;"></div>
<div class="a" style="left:854px;top:299px;width:1px;height:28px;background:#ababab;"></div>
<div class="a" style="left:982px;top:299px;width:1px;height:28px;background:#ababab;"></div>
<div class="a" style="left:1112px;top:299px;width:1px;height:28px;background:#ababab;"></div>
<div class="a" style="left:1202px;top:299px;width:1px;height:28px;background:#ababab;"></div>
<div class="a" style="left:1308px;top:299px;width:1px;height:28px;background:#ababab;"></div>
<div class="a" style="left:1440px;top:299px;width:1px;height:28px;background:#ababab;"></div>
<div class="a" style="left:1519px;top:299px;width:1px;height:28px;background:#ababab;"></div>
<div class="a" style="left:1647px;top:299px;width:1px;height:28px;background:#ababab;"></div>
<div class="a" style="left:1781px;top:299px;width:1px;height:28px;background:#ababab;"></div>
<div class="a" style="left:1874px;top:299px;width:1px;height:28px;background:#ababab;"></div>
<div class="a" style="left:0px;top:327px;width:1889px;height:1px;background:#9e9e9e;"></div>
<div class="t" style="left:83.5px;top:305.2px;font-size:19.5px;color:#262626;">A</div>
<div class="t" style="left:186.0px;top:305.2px;font-size:19.5px;color:#262626;">B</div>
<div class="t" style="left:290.5px;top:305.2px;font-size:19.5px;color:#262626;">C</div>
<div class="t" style="left:421.5px;top:305.2px;font-size:19.5px;color:#262626;">D</div>
<div class="t" style="left:586.0px;top:305.2px;font-size:19.5px;color:#262626;">E</div>
<div class="t" style="left:760.5px;top:305.2px;font-size:19.5px;color:#262626;">F</div>
<div class="t" style="left:910.9px;top:305.2px;font-size:19.5px;color:#262626;">G</div>
<div class="t" style="left:1040.5px;top:305.2px;font-size:19.5px;color:#262626;">H</div>
<div class="t" style="left:1154.8px;top:305.2px;font-size:19.5px;color:#262626;">I</div>
<div class="t" style="left:1250.6px;top:305.2px;font-size:19.5px;color:#262626;">J</div>
<div class="t" style="left:1368.0px;top:305.2px;font-size:19.5px;color:#262626;">K</div>
<div class="t" style="left:1474.6px;top:305.2px;font-size:19.5px;color:#262626;">L</div>
<div class="t" style="left:1575.4px;top:305.2px;font-size:19.5px;color:#262626;">M</div>
<div class="t" style="left:1707.5px;top:305.2px;font-size:19.5px;color:#262626;">N</div>
<div class="t" style="left:1820.4px;top:305.2px;font-size:19.5px;color:#217346;">O</div>
<div class="a" style="left:0px;top:327px;width:39px;height:626px;background:#e6e6e6;"></div>
<div class="a" style="left:0px;top:327px;width:39px;height:49px;background:#d2d2d2;"></div>
<div class="a" style="left:39px;top:327px;width:1px;height:626px;background:#9e9e9e;"></div>
<div class="a" style="left:0px;top:375px;width:39px;height:1px;background:#a6a6a6;"></div>
<div class="a" style="left:0px;top:404px;width:39px;height:1px;background:#a6a6a6;"></div>
<div class="a" style="left:0px;top:433px;width:39px;height:1px;background:#a6a6a6;"></div>
<div class="a" style="left:0px;top:462px;width:39px;height:1px;background:#a6a6a6;"></div>
<div class="a" style="left:0px;top:491px;width:39px;height:1px;background:#a6a6a6;"></div>
<div class="a" style="left:0px;top:520px;width:39px;height:1px;background:#a6a6a6;"></div>
<div class="a" style="left:0px;top:549px;width:39px;height:1px;background:#a6a6a6;"></div>
<div class="a" style="left:0px;top:578px;width:39px;height:1px;background:#a6a6a6;"></div>
<div class="a" style="left:0px;top:607px;width:39px;height:1px;background:#a6a6a6;"></div>
<div class="a" style="left:0px;top:636px;width:39px;height:1px;background:#a6a6a6;"></div>
<div class="a" style="left:0px;top:665px;width:39px;height:1px;background:#a6a6a6;"></div>
<div class="a" style="left:0px;top:694px;width:39px;height:1px;background:#a6a6a6;"></div>
<div class="a" style="left:0px;top:723px;width:39px;height:1px;background:#a6a6a6;"></div>
<div class="a" style="left:0px;top:752px;width:39px;height:1px;background:#a6a6a6;"></div>
<div class="a" style="left:0px;top:781px;width:39px;height:1px;background:#a6a6a6;"></div>
<div class="a" style="left:0px;top:810px;width:39px;height:1px;background:#a6a6a6;"></div>
<div class="a" style="left:0px;top:839px;width:39px;height:1px;background:#a6a6a6;"></div>
<div class="a" style="left:0px;top:868px;width:39px;height:1px;background:#a6a6a6;"></div>
<div class="a" style="left:0px;top:897px;width:39px;height:1px;background:#a6a6a6;"></div>
<div class="a" style="left:0px;top:926px;width:39px;height:1px;background:#a6a6a6;"></div>
<div class="a" style="left:0px;top:955px;width:39px;height:1px;background:#a6a6a6;"></div>
<div class="a" style="left:39px;top:404px;width:1850px;height:1px;background:#d4d4d4;"></div>
<div class="a" style="left:39px;top:433px;width:1850px;height:1px;background:#d4d4d4;"></div>
<div class="a" style="left:39px;top:462px;width:1850px;height:1px;background:#d4d4d4;"></div>
<div class="a" style="left:39px;top:491px;width:1850px;height:1px;background:#d4d4d4;"></div>
<div class="a" style="left:39px;top:520px;width:1850px;height:1px;background:#d4d4d4;"></div>
<div class="a" style="left:39px;top:549px;width:1850px;height:1px;background:#d4d4d4;"></div>
<div class="a" style="left:39px;top:578px;width:1850px;height:1px;background:#d4d4d4;"></div>
<div class="a" style="left:39px;top:607px;width:1850px;height:1px;background:#d4d4d4;"></div>
<div class="a" style="left:39px;top:636px;width:1850px;height:1px;background:#d4d4d4;"></div>
<div class="a" style="left:39px;top:665px;width:1850px;height:1px;background:#d4d4d4;"></div>
<div class="a" style="left:39px;top:694px;width:1850px;height:1px;background:#d4d4d4;"></div>
<div class="a" style="left:39px;top:723px;width:1850px;height:1px;background:#d4d4d4;"></div>
<div class="a" style="left:39px;top:752px;width:1850px;height:1px;background:#d4d4d4;"></div>
<div class="a" style="left:39px;top:781px;width:1850px;height:1px;background:#d4d4d4;"></div>
<div class="a" style="left:39px;top:810px;width:1850px;height:1px;background:#d4d4d4;"></div>
<div class="a" style="left:39px;top:839px;width:1850px;height:1px;background:#d4d4d4;"></div>
<div class="a" style="left:39px;top:868px;width:1850px;height:1px;background:#d4d4d4;"></div>
<div class="a" style="left:39px;top:897px;width:1850px;height:1px;background:#d4d4d4;"></div>
<div class="a" style="left:39px;top:926px;width:1850px;height:1px;background:#d4d4d4;"></div>
<div class="a" style="left:39px;top:955px;width:1850px;height:1px;background:#d4d4d4;"></div>
<div class="a" style="left:140px;top:376px;width:1px;height:577px;background:#d4d4d4;"></div>
<div class="a" style="left:244px;top:376px;width:1px;height:577px;background:#d4d4d4;"></div>
<div class="a" style="left:350px;top:376px;width:1px;height:577px;background:#d4d4d4;"></div>
<div class="a" style="left:506px;top:376px;width:1px;height:577px;background:#d4d4d4;"></div>
<div class="a" style="left:678px;top:376px;width:1px;height:577px;background:#d4d4d4;"></div>
<div class="a" style="left:854px;top:376px;width:1px;height:577px;background:#d4d4d4;"></div>
<div class="a" style="left:982px;top:376px;width:1px;height:577px;background:#d4d4d4;"></div>
<div class="a" style="left:1112px;top:376px;width:1px;height:577px;background:#d4d4d4;"></div>
<div class="a" style="left:1202px;top:376px;width:1px;height:577px;background:#d4d4d4;"></div>
<div class="a" style="left:1308px;top:376px;width:1px;height:577px;background:#d4d4d4;"></div>
<div class="a" style="left:1440px;top:376px;width:1px;height:577px;background:#d4d4d4;"></div>
<div class="a" style="left:1519px;top:376px;width:1px;height:577px;background:#d4d4d4;"></div>
<div class="a" style="left:1647px;top:376px;width:1px;height:577px;background:#d4d4d4;"></div>
<div class="a" style="left:1781px;top:376px;width:1px;height:577px;background:#d4d4d4;"></div>
<div class="a" style="left:1874px;top:376px;width:1px;height:577px;background:#d4d4d4;"></div>
<div class="t" style="left:14.1px;top:352.2px;font-size:19.5px;color:#217346;">1</div>
<div class="t" style="left:14.1px;top:381.5px;font-size:19.5px;color:#262626;">2</div>
<div class="t" style="left:14.1px;top:410.5px;font-size:19.5px;color:#262626;">3</div>
<div class="t" style="left:14.1px;top:439.5px;font-size:19.5px;color:#262626;">4</div>
<div class="t" style="left:14.1px;top:468.5px;font-size:19.5px;color:#262626;">5</div>
<div class="t" style="left:14.1px;top:497.5px;font-size:19.5px;color:#262626;">6</div>
<div class="t" style="left:14.1px;top:526.5px;font-size:19.5px;color:#262626;">7</div>
<div class="t" style="left:14.1px;top:555.5px;font-size:19.5px;color:#262626;">8</div>
<div class="t" style="left:14.1px;top:584.5px;font-size:19.5px;color:#262626;">9</div>
<div class="t" style="left:8.7px;top:613.5px;font-size:19.5px;color:#262626;">10</div>
<div class="t" style="left:9.4px;top:642.5px;font-size:19.5px;color:#262626;">11</div>
<div class="t" style="left:8.7px;top:671.5px;font-size:19.5px;color:#262626;">12</div>
<div class="t" style="left:8.7px;top:700.5px;font-size:19.5px;color:#262626;">13</div>
<div class="t" style="left:8.7px;top:729.5px;font-size:19.5px;color:#262626;">14</div>
<div class="t" style="left:8.7px;top:758.5px;font-size:19.5px;color:#262626;">15</div>
<div class="t" style="left:8.7px;top:787.5px;font-size:19.5px;color:#262626;">16</div>
<div class="t" style="left:8.7px;top:816.5px;font-size:19.5px;color:#262626;">17</div>
<div class="t" style="left:8.7px;top:845.5px;font-size:19.5px;color:#262626;">18</div>
<div class="t" style="left:8.7px;top:874.5px;font-size:19.5px;color:#262626;">19</div>
<div class="t" style="left:8.7px;top:903.5px;font-size:19.5px;color:#262626;">20</div>
<div class="t" style="left:8.7px;top:932.5px;font-size:19.5px;color:#262626;">21</div>
<div class="a" style="left:40px;top:328px;width:1849px;height:48px;background:#a9d08e;"></div>
<div class="a" style="left:1874px;top:328px;width:15px;height:48px;background:#87a573;"></div>
<div class="a" style="left:140px;top:328px;width:1px;height:48px;background:#000;"></div>
<div class="a" style="left:244px;top:328px;width:1px;height:48px;background:#000;"></div>
<div class="a" style="left:350px;top:328px;width:1px;height:48px;background:#000;"></div>
<div class="a" style="left:506px;top:328px;width:1px;height:48px;background:#000;"></div>
<div class="a" style="left:678px;top:328px;width:1px;height:48px;background:#000;"></div>
<div class="a" style="left:854px;top:328px;width:1px;height:48px;background:#000;"></div>
<div class="a" style="left:982px;top:328px;width:1px;height:48px;background:#000;"></div>
<div class="a" style="left:1112px;top:328px;width:1px;height:48px;background:#000;"></div>
<div class="a" style="left:1202px;top:328px;width:1px;height:48px;background:#000;"></div>
<div class="a" style="left:1308px;top:328px;width:1px;height:48px;background:#000;"></div>
<div class="a" style="left:1440px;top:328px;width:1px;height:48px;background:#000;"></div>
<div class="a" style="left:1519px;top:328px;width:1px;height:48px;background:#000;"></div>
<div class="a" style="left:1647px;top:328px;width:1px;height:48px;background:#000;"></div>
<div class="a" style="left:1781px;top:328px;width:1px;height:48px;background:#000;"></div>
<div class="a" style="left:1874px;top:328px;width:1px;height:48px;background:#000;"></div>
<div class="a" style="left:39px;top:375px;width:1850px;height:1px;background:#000;"></div>
<div class="t" style="left:60.8px;top:328.9px;font-size:19px;color:#ff0000;font-weight:bold;letter-spacing:0.79px;">Mã tài</div>
<div class="t" style="left:74.5px;top:357.4px;font-size:19px;color:#ff0000;font-weight:bold;letter-spacing:-1.07px;">sản</div>
<div class="t" style="left:161.4px;top:328.9px;font-size:19px;color:#ff0000;font-weight:bold;">Tên tài</div>
<div class="t" style="left:175.6px;top:357.4px;font-size:19px;color:#ff0000;font-weight:bold;">sản</div>
<div class="t" style="left:264.0px;top:328.9px;font-size:19px;color:#ff0000;font-weight:bold;letter-spacing:-0.16px;">Loại tài</div>
<div class="t" style="left:281.0px;top:357.4px;font-size:19px;color:#ff0000;font-weight:bold;letter-spacing:-0.87px;">sản</div>
<div class="t" style="left:368.3px;top:328.9px;font-size:19px;color:#ff0000;font-weight:bold;letter-spacing:0.62px;">Mã Nhóm tài</div>
<div class="t" style="left:412.0px;top:357.4px;font-size:19px;color:#ff0000;font-weight:bold;letter-spacing:-0.87px;">sản</div>
<div class="t" style="left:533.8px;top:328.9px;font-size:19px;color:#000000;font-weight:bold;letter-spacing:0.06px;">Mã dòng sản</div>
<div class="t" style="left:566.6px;top:357.4px;font-size:19px;color:#000000;font-weight:bold;letter-spacing:0.38px;">phẩm</div>
<div class="t" style="left:705.5px;top:328.9px;font-size:19px;color:#000000;font-weight:bold;letter-spacing:-0.24px;">Tên dòng sản</div>
<div class="t" style="left:740.7px;top:357.4px;font-size:19px;color:#000000;font-weight:bold;letter-spacing:0.31px;">phẩm</div>
<div class="t" style="left:884.6px;top:328.9px;font-size:19px;color:#000000;font-weight:bold;letter-spacing:-0.02px;">Mã Sản</div>
<div class="t" style="left:892.5px;top:357.4px;font-size:19px;color:#000000;font-weight:bold;letter-spacing:0.28px;">phẩm</div>
<div class="t" style="left:1012.4px;top:328.9px;font-size:19px;color:#000000;font-weight:bold;letter-spacing:-0.28px;">Tên sản</div>
<div class="t" style="left:1021.3px;top:357.4px;font-size:19px;color:#000000;font-weight:bold;letter-spacing:0.31px;">phẩm</div>
<div class="t" style="left:1116.3px;top:342.5px;font-size:19px;color:#ff0000;font-weight:bold;letter-spacing:-0.47px;">Số lượng</div>
<div class="t" style="left:1225.2px;top:328.9px;font-size:19px;color:#ff0000;font-weight:bold;letter-spacing:-0.01px;">Đơn vị</div>
<div class="t" style="left:1237.2px;top:357.4px;font-size:19px;color:#ff0000;font-weight:bold;letter-spacing:0.36px;">tính</div>
<div class="t" style="left:1333.8px;top:328.9px;font-size:19px;color:#000000;font-weight:bold;letter-spacing:-0.55px;">Số lượng</div>
<div class="t" style="left:1353.7px;top:357.4px;font-size:19px;color:#000000;font-weight:bold;letter-spacing:0.87px;">đếm</div>
<div class="t" style="left:1444.6px;top:342.5px;font-size:19px;color:#ff0000;font-weight:bold;letter-spacing:-0.29px;">Đơn giá</div>
<div class="t" style="left:1533.3px;top:328.9px;font-size:19px;color:#ff0000;font-weight:bold;letter-spacing:0.10px;">Đơn vị tiền</div>
<div class="t" style="left:1574.1px;top:357.4px;font-size:19px;color:#ff0000;font-weight:bold;letter-spacing:1.60px;">tê</div>
<div class="t" style="left:1666.7px;top:328.9px;font-size:19px;color:#000000;font-weight:bold;letter-spacing:0.34px;">Mã tài sản</div>
<div class="t" style="left:1698.3px;top:357.4px;font-size:19px;color:#000000;font-weight:bold;letter-spacing:-0.77px;">cha</div>
<div class="t" style="left:1791.9px;top:342.5px;font-size:19px;color:#ff0000;font-weight:bold;letter-spacing:-0.08px;">Kiểm kể</div>
<div class="a" style="left:39px;top:375px;width:1850px;height:1px;background:#000;"></div>
<div class="a" style="left:38px;top:327px;width:2px;height:49px;background:#217346;"></div>
<div class="a" style="left:1780px;top:326px;width:112px;height:51px;border:2px solid #217346;border-right:none"></div>
<div class="a" style="left:1782px;top:328px;width:107px;height:47px;border:1px solid #fff;border-right:none"></div>
<div class="a" style="left:1856px;top:379px;width:33px;height:33px;background:#fff;border:1px solid #217346"></div>
<svg style="left:1856px;top:379px;" width="33" height="33" viewBox="0 0 33 33"><rect x="13.8" y="5.6" width="11.8" height="3.4" fill="#707070"/><path d="M25 7V26.2H6V18.5" fill="none" stroke="#707070" stroke-width="1.2"/><rect x="12" y="10.6" width="9" height="3" fill="#d9623b"/><rect x="9" y="16.2" width="14.5" height="2.8" fill="#4a80bd"/><rect x="10.5" y="20.4" width="10" height="2.6" fill="#5aa08a"/><path d="M7 4.2H15.8L11.8 9.6H14.8L5.5 18.8 8.2 12.2H4.8z" fill="#edc27c"/></svg>
<div class="a" style="left:1889px;top:299px;width:1px;height:655px;background:#a6a6a6;"></div>
<div class="a" style="left:1890px;top:299px;width:29px;height:655px;background:#f0f0f0;"></div>
<div class="a" style="left:1892px;top:300px;width:25px;height:25px;background:#fff;border:1px solid #aaaaaa;"></div>
<svg style="left:1899px;top:309px;" width="12" height="7" viewBox="0 0 12 7"><path d="M0.5 6.5L6 0.5l5.5 6z" fill="#222"/></svg>
<div class="a" style="left:1892px;top:325px;width:25px;height:573px;background:#fff;border:1px solid #aaaaaa;"></div>
<div class="a" style="left:1892px;top:930px;width:25px;height:24px;background:#fff;border:1px solid #aaaaaa;"></div>
<svg style="left:1899px;top:939px;" width="12" height="7" viewBox="0 0 12 7"><path d="M0.5 0.5h11L6 6.5z" fill="#222"/></svg>
<div class="a" style="left:0px;top:953px;width:1889px;height:1px;background:#a6a6a6;"></div>
<div class="a" style="left:0px;top:954px;width:1919px;height:33px;background:#e6e6e6;"></div>
<div class="a" style="left:1168px;top:954px;width:722px;height:28px;background:#f0f0f0;"></div>
<svg style="left:28px;top:962px;" width="10" height="14" viewBox="0 0 10 14"><path d="M7.5 1.5v11L1.5 7z" fill="#c0c0c0"/></svg>
<svg style="left:62px;top:962px;" width="10" height="14" viewBox="0 0 10 14"><path d="M2 1.5v11l6-5.5z" fill="#c0c0c0"/></svg>
<div class="a" style="left:118px;top:953px;width:76px;height:30px;background:#fff;"></div>
<div class="a" style="left:118px;top:953px;width:1px;height:30px;background:#a6a6a6;"></div>
<div class="a" style="left:193px;top:953px;width:1px;height:30px;background:#a6a6a6;"></div>
<div class="a" style="left:118px;top:982px;width:76px;height:2px;background:#217346;"></div>
<div class="t" style="left:130.0px;top:958.9px;font-size:19px;color:#217346;font-weight:bold;letter-spacing:-0.19px;">Asset</div>
<div class="t" style="left:209.0px;top:958.9px;font-size:19px;color:#404040;letter-spacing:0.42px;">Init data</div>
<div class="a" style="left:296px;top:957px;width:1px;height:26px;background:#a6a6a6;"></div>
<svg style="left:335px;top:958px;" width="24" height="24" viewBox="0 0 24 24"><circle cx="12" cy="12" r="10.5" fill="none" stroke="#6d6d6d" stroke-width="1.3"/><path d="M12 6.5v11M6.5 12h11" stroke="#6d6d6d" stroke-width="1.5"/></svg>
<div class="a" style="left:1148px;top:962px;width:3px;height:3px;background:#a0a0a0;"></div>
<div class="a" style="left:1148px;top:968px;width:3px;height:3px;background:#a0a0a0;"></div>
<div class="a" style="left:1148px;top:974px;width:3px;height:3px;background:#a0a0a0;"></div>
<div class="a" style="left:1168px;top:957px;width:25px;height:25px;background:#fff;border:1px solid #aaaaaa;"></div>
<svg style="left:1176px;top:963px;" width="8" height="12" viewBox="0 0 8 12"><path d="M6.5 0.5v11L0.5 6z" fill="#222"/></svg>
<div class="a" style="left:1192px;top:957px;width:110px;height:25px;background:#fff;border:1px solid #aaaaaa;"></div>
<div class="a" style="left:1866px;top:957px;width:25px;height:25px;background:#fff;border:1px solid #aaaaaa;"></div>
<svg style="left:1875px;top:963px;" width="8" height="12" viewBox="0 0 8 12"><path d="M0.5 0.5v11L6.5 6z" fill="#222"/></svg>
<div class="a" style="left:0px;top:987px;width:1919px;height:1px;background:#d0d0d0;"></div>
<div class="a" style="left:0px;top:988px;width:1919px;height:30px;background:#f3f3f3;"></div>
<div class="t" style="left:16.0px;top:996.5px;font-size:16px;color:#404040;letter-spacing:-1.06px;">Ready</div>
<svg style="left:88px;top:993px;" width="22" height="23" viewBox="0 0 22 23"><path d="M9 2.5A8.5 8.5 0 1 0 17.5 12" fill="none" stroke="#404040" stroke-width="1.4" stroke-dasharray="3 1.5"/><path d="M10 1v10h8M14.5 8l3.5 3-3.5 3" fill="none" stroke="#404040" stroke-width="1.4"/><path d="M11 14l8 8M19 14l-8 8" stroke="#404040" stroke-width="2"/></svg>
<div class="t" style="left:114.0px;top:996.5px;font-size:16px;color:#262626;font-weight:bold;letter-spacing:-0.17px;">Accessibility: Investigate</div>
<div class="t" style="left:1390.0px;top:996.5px;font-size:16px;color:#404040;letter-spacing:-0.50px;">Count: 2</div>
<div class="a" style="left:1475px;top:988px;width:60px;height:30px;background:#c6c6c6;"></div>
<svg style="left:1494px;top:993px;" width="21" height="21" viewBox="0 0 21 21"><rect x="1" y="1" width="18" height="18" fill="none" stroke="#6d6d6d" stroke-width="1"/><path d="M1 7h18M1 13h18M7 1v18M13 1v18" stroke="#6d6d6d" stroke-width="1"/></svg>
<svg style="left:1554px;top:993px;" width="21" height="21" viewBox="0 0 21 21"><rect x="1" y="1" width="18" height="18" fill="none" stroke="#6d6d6d" stroke-width="1.1"/><rect x="5" y="4" width="10" height="12" fill="none" stroke="#6d6d6d" stroke-width="1"/><path d="M7 7h6M7 9.5h6M7 12h6" stroke="#6d6d6d" stroke-width="1"/></svg>
<svg style="left:1614px;top:993px;" width="21" height="21" viewBox="0 0 21 21"><rect x="1" y="1" width="18" height="18" fill="none" stroke="#6d6d6d" stroke-width="1.1"/><path d="M1 10h8V1M12 1v9h7" fill="none" stroke="#6d6d6d" stroke-width="1"/></svg>
<div class="a" style="left:1662px;top:1003px;width:12px;height:1.3px;background:#404040;"></div>
<div class="a" style="left:1683px;top:1002px;width:148px;height:2px;background:#404040;"></div>
<div class="a" style="left:1753px;top:995px;width:8px;height:17px;background:#404040;"></div>
<div class="a" style="left:1838px;top:1003px;width:12px;height:1.3px;background:#404040;"></div>
<div class="a" style="left:1843.3px;top:997.5px;width:1.3px;height:12px;background:#404040;"></div>
<div class="t" style="left:1869.4px;top:996.5px;font-size:16px;color:#404040;letter-spacing:-0.87px;">100%</div>
</body></html>
